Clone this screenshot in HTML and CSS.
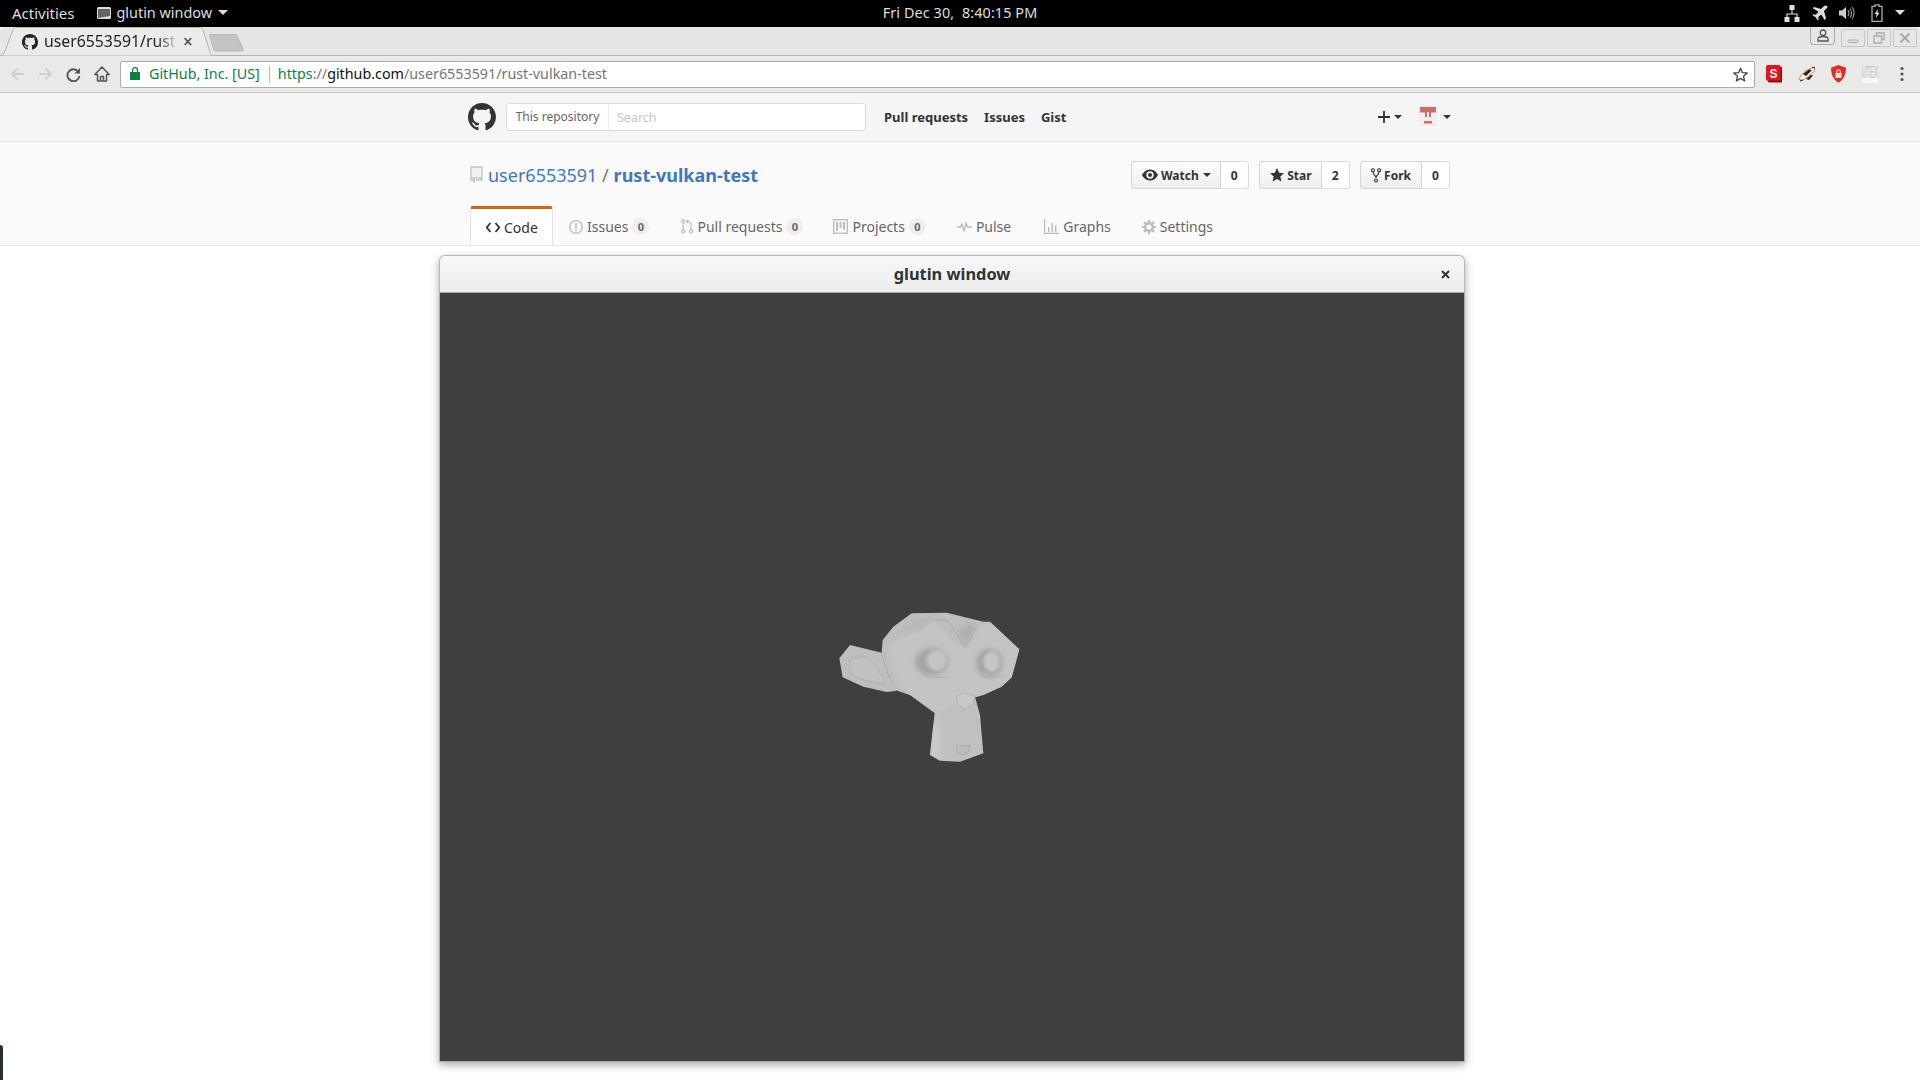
FILE: index.html
```html
<!DOCTYPE html>
<html lang="en">
<head>
<meta charset="utf-8">
<title>glutin window</title>
<link rel="stylesheet" href="styles.css">
</head>
<body>
<header class="topbar">
  <div class="top-left">
    <span class="activities">Activities</span>
    <svg class="app-icon" width="16" height="14" viewBox="0 0 16 14"><rect x="1" y="1" width="14" height="12" rx="1.500" fill="#ddd"/><path d="M2 3h12v7l-12 2z" fill="#666"/></svg>
    <span class="app-name">glutin window</span>
    <span class="caret caret-light"></span>
  </div>
  <div class="clock">Fri Dec 30,&nbsp; 8:40:15 PM</div>
  <div class="tray">
    <svg width="16" height="18" viewBox="0 0 16 18"><path d="M5.500 1h5v5h-5zM0.500 13h5v5h-5zM10.500 13h5v5h-5z" fill="#ddd"/><path d="M8 6v4M3 13v-3h10v3" fill="none" stroke="#ddd" stroke-width="1.200"/></svg>
    <svg width="16" height="16" viewBox="0 0 16 16"><path d="M15 1c-1-1-2.500-.5-3.500.5L9 4 2 2 .8 3.200 6.500 6.800 3.800 9.800 1.500 9.300.5 10.300l3.200 2 2 3.200 1-1-.5-2.300 3-2.700 3.600 5.700L14 13l-2-7 2.500-2.500c1-1 1.500-1.500.5-2.500z" fill="#ddd"/></svg>
    <svg width="16" height="16" viewBox="0 0 16 16"><path d="M0 5.500h3L7 2v12l-4-3.500H0z" fill="#ccc"/><path d="M9 5c1.200 1.800 1.200 4.200 0 6M11 3.500c2 2.500 2 6.500 0 9M13 2c2.800 3.500 2.800 8.500 0 12" fill="none" stroke="#999" stroke-width="1.100"/></svg>
    <svg width="12" height="18" viewBox="0 0 12 18"><path d="M4 .8h4v1.500h3v15H1v-15h3z" fill="none" stroke="#aaa" stroke-width="1.300"/><path d="M7 5 3.500 10h2L5 14l3.500-5.200h-2z" fill="#ddd"/></svg>
    <span class="caret caret-light caret-tray"></span>
  </div>
</header>

<div class="tabstrip">
  <div class="tab">
    <svg class="tab-shape" width="212" height="29" viewBox="0 0 212 29"><path d="M0 28.500h.5C3 28.500 4 27 5 24L13 3C14 1 15 .5 17 .5h182c2 0 3 .5 4 2.500l7 22c.5 2 1 3.500 2 3.500" fill="#ebebe9" stroke="#b4b4b4"/></svg>
    <svg class="favicon" width="16" height="16" viewBox="0 0 16 16"><path fill="#222" d="M8 0C3.580 0 0 3.580 0 8c0 3.540 2.290 6.530 5.470 7.590.4.070.55-.17.55-.38 0-.19-.01-.82-.01-1.490-2.010.37-2.530-.49-2.690-.94-.09-.23-.48-.94-.82-1.130-.28-.15-.68-.52-.01-.53.63-.01 1.080.58 1.230.82.72 1.210 1.870.87 2.330.66.070-.52.280-.87.510-1.070-1.780-.2-3.640-.89-3.640-3.950 0-.87.310-1.590.820-2.150-.08-.2-.36-1.020.08-2.120 0 0 .67-.21 2.200.82.640-.18 1.320-.27 2-.27s1.360.09 2 .27c1.530-1.040 2.200-.82 2.200-.82.44 1.100.16 1.920.08 2.120.51.560.82 1.270.82 2.150 0 3.070-1.870 3.750-3.650 3.950.29.250.54.730.54 1.480 0 1.070-.01 1.930-.01 2.200 0 .21.150.46.550.38A8.013 8.013 0 0 0 16 8c0-4.420-3.580-8-8-8z"/></svg>
    <span class="tab-title">user6553591/rust</span>
    <span class="tab-close">×</span>
  </div>
  <svg class="newtab" width="36" height="19" viewBox="0 0 36 19"><path d="M1 1.500h25c1.500 0 2 .5 2.500 2L34 16c.5 1.500 0 2-1.500 2H7c-1.500 0-2-.5-2.500-2L.5 2.500C.3 1.500.5 1.500 1 1.500z" fill="#c4c4c4" stroke="#b8b8b8"/></svg>
  <div class="winbtns">
    <div class="profile"><svg width="12" height="13" viewBox="0 0 12 13"><circle cx="6" cy="3.800" r="2.800" fill="none" stroke="#555" stroke-width="1.300"/><path d="M1 12v-2c0-1.500 2-2.500 5-2.500s5 1 5 2.500v2z" fill="none" stroke="#555" stroke-width="1.300"/></svg></div>
    <div class="winbtn"><svg width="12" height="12" viewBox="0 0 12 12"><rect x="1" y="8" width="10" height="2.500" rx="1" fill="none" stroke="#aaa"/></svg></div>
    <div class="winbtn"><svg width="12" height="12" viewBox="0 0 12 12"><path d="M3.500 3V1h7.500v6.500H8.500M1 4h7.500v7H1z" fill="none" stroke="#aaa" stroke-width="1.300"/></svg></div>
    <div class="winbtn"><svg width="12" height="12" viewBox="0 0 12 12"><path d="M1.500 1.500l9 9m0-9l-9 9" fill="none" stroke="#aaa" stroke-width="2"/></svg></div>
  </div>
</div>

<div class="toolbar">
  <svg class="nav n-back" width="14" height="14" viewBox="0 0 14 14"><path d="M14 7H2M7.500 1.500 2 7l5.500 5.500" fill="none" stroke="#cfcfcf" stroke-width="1.800"/></svg>
  <svg class="nav n-fwd" width="14" height="14" viewBox="0 0 14 14"><path d="M0 7h12M6.500 1.500 12 7l-5.500 5.500" fill="none" stroke="#cfcfcf" stroke-width="1.800"/></svg>
  <svg class="nav n-reload" width="15" height="15" viewBox="0 0 15 15"><path d="M12.500 5A6 6 0 1 0 13.400 9" fill="none" stroke="#555" stroke-width="1.900"/><path d="M14 1v5.500H8.500z" fill="#555"/></svg>
  <svg class="nav n-home" width="16" height="16" viewBox="0 0 16 16"><path d="M8 1 .8 8.500h2.700V15h9V8.500h2.700zM6.500 15v-4.500h3V15" fill="none" stroke="#555" stroke-width="1.500" stroke-linejoin="round"/></svg>
  <div class="omnibox">
    <svg class="lock" width="10" height="13" viewBox="0 0 10 13"><path d="M0 5h10v8H0z" fill="#0b8043"/><path d="M2.500 5V3.200a2.500 2.500 0 0 1 5 0V5" fill="none" stroke="#0b8043" stroke-width="1.300"/></svg>
    <span class="secure">GitHub, Inc. [US]</span>
    <span class="omni-sep"></span>
    <span class="url"><span class="url-https">https</span><span class="url-rest">://</span><span class="url-host">github.com</span><span class="url-rest">/user6553591/rust-vulkan-test</span></span>
    <svg class="star" width="15" height="15" viewBox="0 0 16 16"><path d="M8 1.300 10 6l5.200.4-4 3.400 1.200 5L8 12.100l-4.400 2.700 1.200-5-4-3.400L6 6z" fill="none" stroke="#444" stroke-width="1.400" stroke-linejoin="round"/></svg>
  </div>
  <div class="extensions">
    <svg width="16" height="18" viewBox="0 0 16 18"><path d="M1.500 2H16v15.500H3l-1.500-1.500z" fill="#8f0d14"/><rect x="0" y="0" width="14.500" height="15.500" rx="1.500" fill="#e3131f"/><text x="7.500" y="12.500" class="ext-s" text-anchor="middle">S</text></svg>
    <svg width="18" height="16" viewBox="0 0 18 16"><path d="M1 13C4 7 9 3 16 1.500l1 3C13 8 9 12 4 14.500z" fill="#f3f3f3" stroke="#d9862f" stroke-width="1"/><path d="M5 8l6-4.500 3 .5-6 6zM8 13l5-4 2 .5-4 4.500z" fill="#222"/><path d="M2 15l3-1M14 1l3 1" stroke="#222" stroke-width="1"/></svg>
    <svg width="15" height="18" viewBox="0 0 15 18"><path d="M7.500 0 15 2.800c0 7-2.500 12-7.500 15C2.500 14.800 0 9.800 0 2.800z" fill="#d8312c"/><path d="M4.500 8h6v5h-6z" fill="#f6dcd9"/><path d="M5.800 8V6.500a1.700 1.700 0 0 1 3.400 0V8" fill="none" stroke="#f6dcd9" stroke-width="1.100"/></svg>
    <svg class="ext-utex" width="16" height="18" viewBox="0 0 16 18"><rect y="12" width="16" height="6" fill="#f7f7f7"/><text x="0" y="13" class="ext-u" textLength="16" lengthAdjust="spacingAndGlyphs">UTEX</text></svg>
    <svg class="ext-menu" width="4" height="16" viewBox="0 0 4 16"><circle cx="2" cy="2.500" r="1.600" fill="#555"/><circle cx="2" cy="8" r="1.600" fill="#555"/><circle cx="2" cy="13.500" r="1.600" fill="#555"/></svg>
  </div>
</div>

<main class="page">
  <div class="gh-header">
    <div class="container gh-header-inner">
      <svg class="gh-logo" width="28" height="28" viewBox="0 0 16 16"><path fill="#333" d="M8 0C3.580 0 0 3.580 0 8c0 3.540 2.290 6.530 5.470 7.590.4.070.55-.17.55-.38 0-.19-.01-.82-.01-1.490-2.010.37-2.530-.49-2.690-.94-.09-.23-.48-.94-.82-1.130-.28-.15-.68-.52-.01-.53.63-.01 1.080.58 1.230.82.72 1.210 1.870.87 2.330.66.070-.52.280-.87.510-1.070-1.780-.2-3.640-.89-3.640-3.950 0-.87.310-1.590.820-2.150-.08-.2-.36-1.020.08-2.120 0 0 .67-.21 2.200.82.640-.18 1.320-.27 2-.27s1.360.09 2 .27c1.530-1.040 2.200-.82 2.200-.82.44 1.100.16 1.920.08 2.120.51.560.82 1.270.82 2.150 0 3.070-1.870 3.750-3.650 3.950.29.250.54.730.54 1.480 0 1.070-.01 1.930-.01 2.200 0 .21.150.46.550.38A8.013 8.013 0 0 0 16 8c0-4.420-3.580-8-8-8z"/></svg>
      <div class="search">
        <span class="search-scope">This repository</span>
        <span class="search-input">Search</span>
      </div>
      <nav class="gh-nav">
        <a>Pull requests</a>
        <a>Issues</a>
        <a>Gist</a>
      </nav>
      <div class="gh-user">
        <svg class="plus" width="12" height="12" viewBox="0 0 12 12"><path d="M6 0v12M0 6h12" stroke="#333" stroke-width="1.800"/></svg>
        <span class="caret caret-dark caret-plus"></span>
        <svg class="avatar" width="18" height="20" viewBox="0 0 18 20"><rect width="18" height="20" rx="1" fill="#eee"/><path d="M1 1h16v5.500h-5V11H6V6.500H1zM5 15h8v2.500H5z" fill="#cf6d6d"/><path d="M8 6h2v6H8z" fill="#eee"/></svg>
        <span class="caret caret-dark caret-av"></span>
      </div>
    </div>
  </div>

  <div class="repohead">
    <div class="container">
      <div class="repo-row">
        <h1 class="repo-title">
          <svg class="book" width="13" height="17" viewBox="0 0 13 17"><path d="M1 1h11v11H1zM1 12v2h2M6 14h6v-2" fill="#f1f1f1" stroke="#c4c4c4" stroke-width="1.300"/><path d="M3 13h2v4L4 16l-1 1z" fill="#c4c4c4"/></svg>
          <a class="repo-owner">user6553591</a>
          <span class="repo-slash">/</span>
          <a class="repo-name">rust-vulkan-test</a>
        </h1>
        <div class="actions">
          <div class="btn-pair">
            <span class="btn btn-watch"><svg width="16" height="12" viewBox="0 0 16 12"><path d="M8 .5C3.500.5 1 4 0 6c1 2 3.500 5.500 8 5.500S15 8 16 6C15 4 12.500.5 8 .5z" fill="#333"/><circle cx="8" cy="6" r="3.700" fill="#f4f4f4"/><circle cx="8" cy="6" r="2" fill="#333"/></svg>Watch<span class="caret caret-dark caret-btn"></span></span>
            <span class="count">0</span>
          </div>
          <div class="btn-pair">
            <span class="btn btn-star"><svg width="14" height="14" viewBox="0 0 14 14"><path d="M7 0l2.100 4.700 4.900.5-3.700 3.300 1.100 5L7 11l-4.400 2.500 1.100-5L0 5.200l4.900-.5z" fill="#333"/></svg>Star</span>
            <span class="count">2</span>
          </div>
          <div class="btn-pair">
            <span class="btn"><svg width="10" height="15" viewBox="0 0 10 15"><path d="M2 4c0 3 3 3 3 6m3-6c0 3-3 3-3 6" fill="none" stroke="#333" stroke-width="1.100"/><circle cx="2" cy="2.300" r="1.500" fill="none" stroke="#333" stroke-width="1.100"/><circle cx="8" cy="2.300" r="1.500" fill="none" stroke="#333" stroke-width="1.100"/><circle cx="5" cy="12.500" r="1.500" fill="none" stroke="#333" stroke-width="1.100"/></svg>Fork</span>
            <span class="count">0</span>
          </div>
        </div>
      </div>
      <nav class="repo-tabs">
        <a class="rtab rtab-active"><svg width="14" height="11" viewBox="0 0 14 11"><path d="M4.500 1 .8 5.500 4.500 10M9.500 1l3.700 4.500L9.500 10" fill="none" stroke="#333" stroke-width="1.800"/></svg>Code</a>
        <a class="rtab rtab-issues"><svg width="14" height="14" viewBox="0 0 14 14"><circle cx="7" cy="7" r="6.300" fill="none" stroke="#bbb" stroke-width="1.300"/><path d="M6.200 3h1.600v5.200H6.200zM6.200 9.300h1.600v1.600H6.200z" fill="#bbb"/></svg>Issues<span class="counter">0</span></a>
        <a class="rtab rtab-pulls"><svg width="12" height="15" viewBox="0 0 12 15"><circle cx="2.200" cy="2.500" r="1.600" fill="none" stroke="#bbb" stroke-width="1.100"/><circle cx="2.200" cy="12.500" r="1.600" fill="none" stroke="#bbb" stroke-width="1.100"/><circle cx="10" cy="12.500" r="1.600" fill="none" stroke="#bbb" stroke-width="1.100"/><path d="M2.200 4v7M10 11V4.500c0-1.500-1-2-2.500-2H6M7.500 0.500l-2 2 2 2" fill="none" stroke="#bbb" stroke-width="1.100"/></svg>Pull requests<span class="counter">0</span></a>
        <a class="rtab rtab-projects"><svg width="15" height="15" viewBox="0 0 15 15"><rect x=".7" y=".7" width="13.600" height="13.600" fill="none" stroke="#bbb" stroke-width="1.300"/><path d="M3 3h2v9H3zM6.500 3h2v6h-2zM10 3h2v7.500h-2z" fill="#bbb"/></svg>Projects<span class="counter">0</span></a>
        <a class="rtab rtab-pulse"><svg width="15" height="11" viewBox="0 0 15 11"><path d="M0 6h3.500l1.500-3 2 7 2-8 1.500 4H15" fill="none" stroke="#bbb" stroke-width="1.300"/></svg>Pulse</a>
        <a class="rtab rtab-graphs"><svg width="15" height="15" viewBox="0 0 15 15"><path d="M.6 0v14.400H15" fill="none" stroke="#bbb" stroke-width="1.100"/><path d="M4 8h1.400v5H4zM7.500 4h1.400v9H7.500zM11 6.500h1.400V13H11z" fill="#bbb"/></svg>Graphs</a>
        <a class="rtab rtab-settings"><svg width="14" height="14" viewBox="0 0 14 14"><circle cx="7" cy="7" r="3.800" fill="none" stroke="#bbb" stroke-width="2.400"/><path d="M7 0v3M7 11v3M0 7h3M11 7h3M2 2l2.100 2.100M9.900 9.900 12 12M12 2 9.900 4.100M4.100 9.900 2 12" stroke="#bbb" stroke-width="2.200"/></svg>Settings</a>
      </nav>
    </div>
  </div>

  <section class="glutin">
    <div class="glutin-title">
      <span class="glutin-name">glutin window</span>
      <svg class="glutin-close" width="9" height="9" viewBox="0 0 9 9"><path d="M1 1l7 7m0-7L1 8" stroke="#2e3436" stroke-width="2"/></svg>
    </div>
    <div class="glutin-canvas">
      <svg class="monkey" width="220" height="190" viewBox="0 0 660 570">
        <defs>
          <filter id="soft" x="-40%" y="-40%" width="180%" height="180%"><feGaussianBlur stdDeviation="8"/></filter>
          <filter id="softer" x="-40%" y="-40%" width="180%" height="180%"><feGaussianBlur stdDeviation="5"/></filter>
          <clipPath id="headclip"><path d="M275 70 380 68 490 95 510 95 598 178 575 262 545 290 490 315 465 322 345 370 270 315 225 300 205 255 185 190 188 150 220 110z"/></clipPath>
          <clipPath id="neckclip"><path d="M345 360 465 320 480 375 490 490 420 515 360 512 330 495z"/></clipPath>
        </defs>
        <path d="M345 360 465 320 480 375 490 490 420 515 360 512 330 495z" fill="#c0c0c0"/>
        <g clip-path="url(#neckclip)"><path d="M330 420 360 380 360 512 330 500z" fill="#cacaca" filter="url(#soft)"/></g>
        <path d="M130 175 185 188 205 255 228 303 200 306 130 290 68 262 58 205 90 165z" fill="#bebebe"/>
        <path d="M88 228 95 205 130 200 165 225 190 265 190 282 135 272 95 255z" fill="#c2c2c2" stroke="#a8a8a8" stroke-width="2"/>
        <path d="M275 70 380 68 490 95 510 95 598 178 575 262 545 290 490 315 465 322 345 370 270 315 225 300 205 255 185 190 188 150 220 110z" fill="#bebebe"/>
        <g clip-path="url(#headclip)">
          <path d="M205 170 340 90 410 170 470 110 520 100 600 180 580 270 480 320 350 370 260 310 220 240z" fill="#c4c4c4" filter="url(#softer)"/>
          <path d="M230 130 290 85 360 80 300 120z" fill="#b8b8b8" filter="url(#soft)"/>
          <path d="M410 125 440 170 470 110 450 95z" fill="#b0b0b0" filter="url(#soft)"/>
          <ellipse cx="335" cy="215" rx="50" ry="42" fill="#a6a6a6" filter="url(#soft)"/>
          <ellipse cx="508" cy="218" rx="40" ry="42" fill="#a6a6a6" filter="url(#soft)"/>
          <ellipse cx="350" cy="212" rx="30" ry="31" fill="#c4c4c4" filter="url(#softer)"/>
          <ellipse cx="515" cy="215" rx="24" ry="30" fill="#c6c6c6" filter="url(#softer)"/>
          <path d="M345 90 385 92 408 130 435 172 470 112" fill="none" stroke="#a8a8a8" stroke-width="2.500"/>
          <path d="M305 250c20 12 50 18 75 8M480 255c20 12 40 12 70 0" fill="none" stroke="#acacac" stroke-width="2.500"/>
        </g>
        <path d="M408 318 430 310 465 318 460 340 435 358 412 340z" fill="#c8c8c8" stroke="#aeaeae" stroke-width="2"/>
        <path d="M408 468 450 466 445 488 425 495 410 485z" fill="#bcbcbc" stroke="#a4a4a4" stroke-width="2"/>
      </svg>
    </div>
  </section>
  <div class="edge-sliver"></div>
</main>
</body>
</html>
```
FILE: styles.css
```css
* { box-sizing: border-box; }
html, body { margin: 0; height: 100%; overflow: hidden; }
body { font-family: "Noto Sans", "Liberation Sans", sans-serif; background: #fff; color: #333; width: 1920px; height: 1080px; position: relative; }
a { text-decoration: none; }

.caret { display: inline-block; width: 0; height: 0; border-left: 4px solid transparent; border-right: 4px solid transparent; }
.caret-light { border-top: 5px solid #ddd; border-left-width: 5px; border-right-width: 5px; }
.caret-dark { border-top: 4px solid #333; }

/* GNOME top bar */
.topbar { height: 27px; background: #000; color: #dedede; font-size: 14.400px; display: grid; grid-template-columns: 1fr auto 1fr; align-items: center; padding-bottom: 2px; }
.top-left { display: flex; align-items: center; padding-left: 12px; }
.activities { margin-right: 21px; font-size: 15px; }
.app-icon { margin-right: 5px; }
.app-name { margin-right: 6px; }
.clock { letter-spacing: .1px; }
.tray { display: flex; align-items: center; justify-content: flex-end; padding-right: 15px; }
.tray svg:nth-child(1) { margin-right: 12px; }
.tray svg:nth-child(2) { margin-right: 11px; }
.tray svg:nth-child(3) { margin-right: 16px; }
.tray svg:nth-child(4) { margin-right: 12px; }

/* Chrome tab strip */
.tabstrip { height: 29px; background: #e6e6e4; border-bottom: 1px solid #b4b4b4; display: flex; align-items: flex-start; position: relative; border-top-left-radius: 4px; border-top-right-radius: 4px; }
.tab { width: 212px; height: 29px; position: relative; display: flex; align-items: center; flex: none; padding-left: 22px; padding-bottom: 2px; font-size: 15.800px; color: #222; z-index: 1; }
.tab-shape { position: absolute; left: 0; top: 0; }
.favicon, .tab-title, .tab-close { position: relative; }
.favicon { flex: none; margin-right: 6px; margin-top: 2px; }
.tab-title { width: 134px; overflow: hidden; white-space: nowrap; -webkit-mask-image: linear-gradient(90deg, #000 84%, rgba(0,0,0,.1) 99%); mask-image: linear-gradient(90deg, #000 84%, rgba(0,0,0,.1) 99%); }
.tab-close { margin-left: 5px; font-size: 17px; color: #555; line-height: 1; font-weight: 600; margin-top: 2px; }
.newtab { margin: 6px 0 0 -3px; flex: none; }
.winbtns { margin-left: auto; display: flex; padding-right: 3px; gap: 2px; }
.profile { width: 25px; height: 18px; border: 1px solid #aaa; border-top: 0; border-radius: 0 0 4px 4px; display: flex; align-items: center; justify-content: center; margin-right: 4px; }
.winbtn { width: 24px; height: 18px; margin-top: 2px; border: 1px solid #c6c6c6; border-radius: 2px; display: flex; align-items: center; justify-content: center; }

/* Chrome toolbar */
.toolbar { height: 37px; background: #e9e9e7; border-bottom: 1px solid #c8c8c8; display: flex; align-items: center; padding-left: 10px; }
.nav { flex: none; }
.n-back { margin-right: 15px; }
.n-fwd { margin-right: 13px; }
.n-reload { margin-right: 13px; }
.n-home { margin-right: 10px; }
.omnibox { width: 1635px; height: 27px; background: #fff; border: 1px solid #ababab; border-radius: 2px; display: flex; align-items: center; padding-left: 9px; padding-bottom: 2px; font-size: 14.300px; white-space: nowrap; flex: none; }
.lock { flex: none; margin-right: 9px; margin-top: 1px; }
.secure { color: #0b8043; }
.omni-sep { width: 1px; height: 17px; background: #bbb; margin: 2px 8px 0 9px; }
.url-https { color: #0b8043; }
.url-rest { color: #757575; }
.url-host { color: #111; }
.star { margin-left: auto; margin-right: 6px; margin-top: 2px; }
.extensions { display: flex; align-items: center; padding-left: 11px; gap: 15.600px; }
.ext-s { font: 700 12px "Liberation Sans", sans-serif; fill: #fff; }
.ext-utex { overflow: visible; }
.ext-u { font: 400 17px "Liberation Sans", sans-serif; fill: #c4c4c4; }
.ext-menu { margin-left: 7px; }

/* GitHub page */
.page { position: relative; height: 988px; }
.container { width: 980px; margin: 0 auto; }
.gh-header { height: 49px; background: #f5f5f5; border-bottom: 1px solid #e5e5e5; }
.gh-header-inner { display: flex; align-items: center; height: 48px; position: relative; left: 1px; width: 986px; }
.gh-logo { flex: none; margin-right: 10px; }
.search { width: 360px; height: 28px; background: #fff; border: 1px solid #ddd; border-radius: 3px; display: flex; align-items: center; font-size: 12px; flex: none; }
.search-scope { width: 102px; height: 100%; border-right: 1px solid #eee; display: flex; align-items: center; justify-content: center; color: #666; padding-bottom: 1px; }
.search-input { color: #c5c5c5; padding-left: 8px; font-size: 12.500px; }
.gh-nav { display: flex; margin-left: 18px; font-size: 13px; font-weight: 700; gap: 16px; color: #333; }
.gh-user { margin-left: auto; display: flex; align-items: center; height: 28px; padding-right: 3px; }
.plus { margin-right: 4px; }
.caret-plus { margin-right: 17px; }
.avatar { margin-right: 6px; margin-top: -3px; }
.caret-av { margin-top: -1px; }

.repohead { height: 104px; background: #fafafa; border-bottom: 1px solid #e5e5e5; }
.repo-row { height: 64px; display: flex; align-items: center; justify-content: space-between; }
.repo-title { margin: 0; font-size: 18px; font-weight: 400; display: flex; align-items: center; padding-top: 2px; }
.book { margin-right: 5px; margin-top: -2px; }
.repo-owner { color: #4078c0; }
.repo-slash { color: #777; margin: 0 5px 0 4.500px; }
.repo-name { color: #4078c0; font-weight: 700; }
.actions { display: flex; gap: 10.500px; padding-top: 2px; }
.btn-pair { display: flex; height: 28px; font-size: 12px; font-weight: 700; }
.btn { display: flex; align-items: center; gap: 3px; padding: 0 10px; background: linear-gradient(#fcfcfc, #eee); border: 1px solid #d5d5d5; border-radius: 3px 0 0 3px; color: #333; }
.btn-watch { padding-right: 9px; }
.btn-star { padding-right: 9px; }
.count { width: 28px; display: flex; align-items: center; justify-content: center; background: #fff; border: 1px solid #ddd; border-left: 0; border-radius: 0 3px 3px 0; }
.caret-btn { margin-left: 1px; }
.repo-tabs { display: flex; height: 39px; font-size: 14px; color: #666; }
.rtab { display: flex; align-items: center; color: #666; white-space: nowrap; height: 39px; padding-left: 16px; padding-top: 2px; }
.rtab svg { margin-right: 4px; }
.rtab-active { width: 83px; padding-left: 15px; padding-top: 0; background: #fff; color: #333; border: 1px solid #e5e5e5; border-top: 3px solid #d26911; border-bottom: 0; border-radius: 3px 3px 0 0; position: relative; }
.rtab-issues { padding-left: 16px; }
.counter { margin-left: 4px; min-width: 17px; height: 17px; border-radius: 9px; background: #eee; color: #666; font-size: 11px; font-weight: 700; display: flex; align-items: center; justify-content: center; }
.rtab-pulls { padding-left: 32px; }
.rtab-projects { padding-left: 30px; }
.rtab-pulse { padding-left: 31px; }
.rtab-graphs { padding-left: 33px; }
.rtab-settings { padding-left: 31px; }

/* Floating application window */
.glutin { position: absolute; left: 439px; top: 162px; width: 1026px; height: 807px; border-radius: 6px 6px 0 0; box-shadow: 0 3px 9px rgba(0,0,0,.35); display: flex; flex-direction: column; }
.glutin-title { height: 38px; flex: none; background: linear-gradient(#f7f7f7, #ededed); border: 1px solid #b8b8b8; border-bottom: 1px solid #a9a9a9; border-radius: 6px 6px 0 0; display: flex; align-items: center; justify-content: center; position: relative; padding-bottom: 1px; }
.glutin-name { font-size: 16.400px; font-weight: 700; color: #2e3436; }
.glutin-close { position: absolute; right: 14px; top: 14px; }
.glutin-canvas { flex: 1; background: #3f3f3f; border: 1px solid #aaa; border-top: 0; position: relative; }
.monkey { position: absolute; left: 380px; top: 297px; }
.edge-sliver { position: absolute; left: 0; bottom: 0; width: 3px; height: 36px; background: #2b2e30; border-radius: 0 3px 0 0; }
```
